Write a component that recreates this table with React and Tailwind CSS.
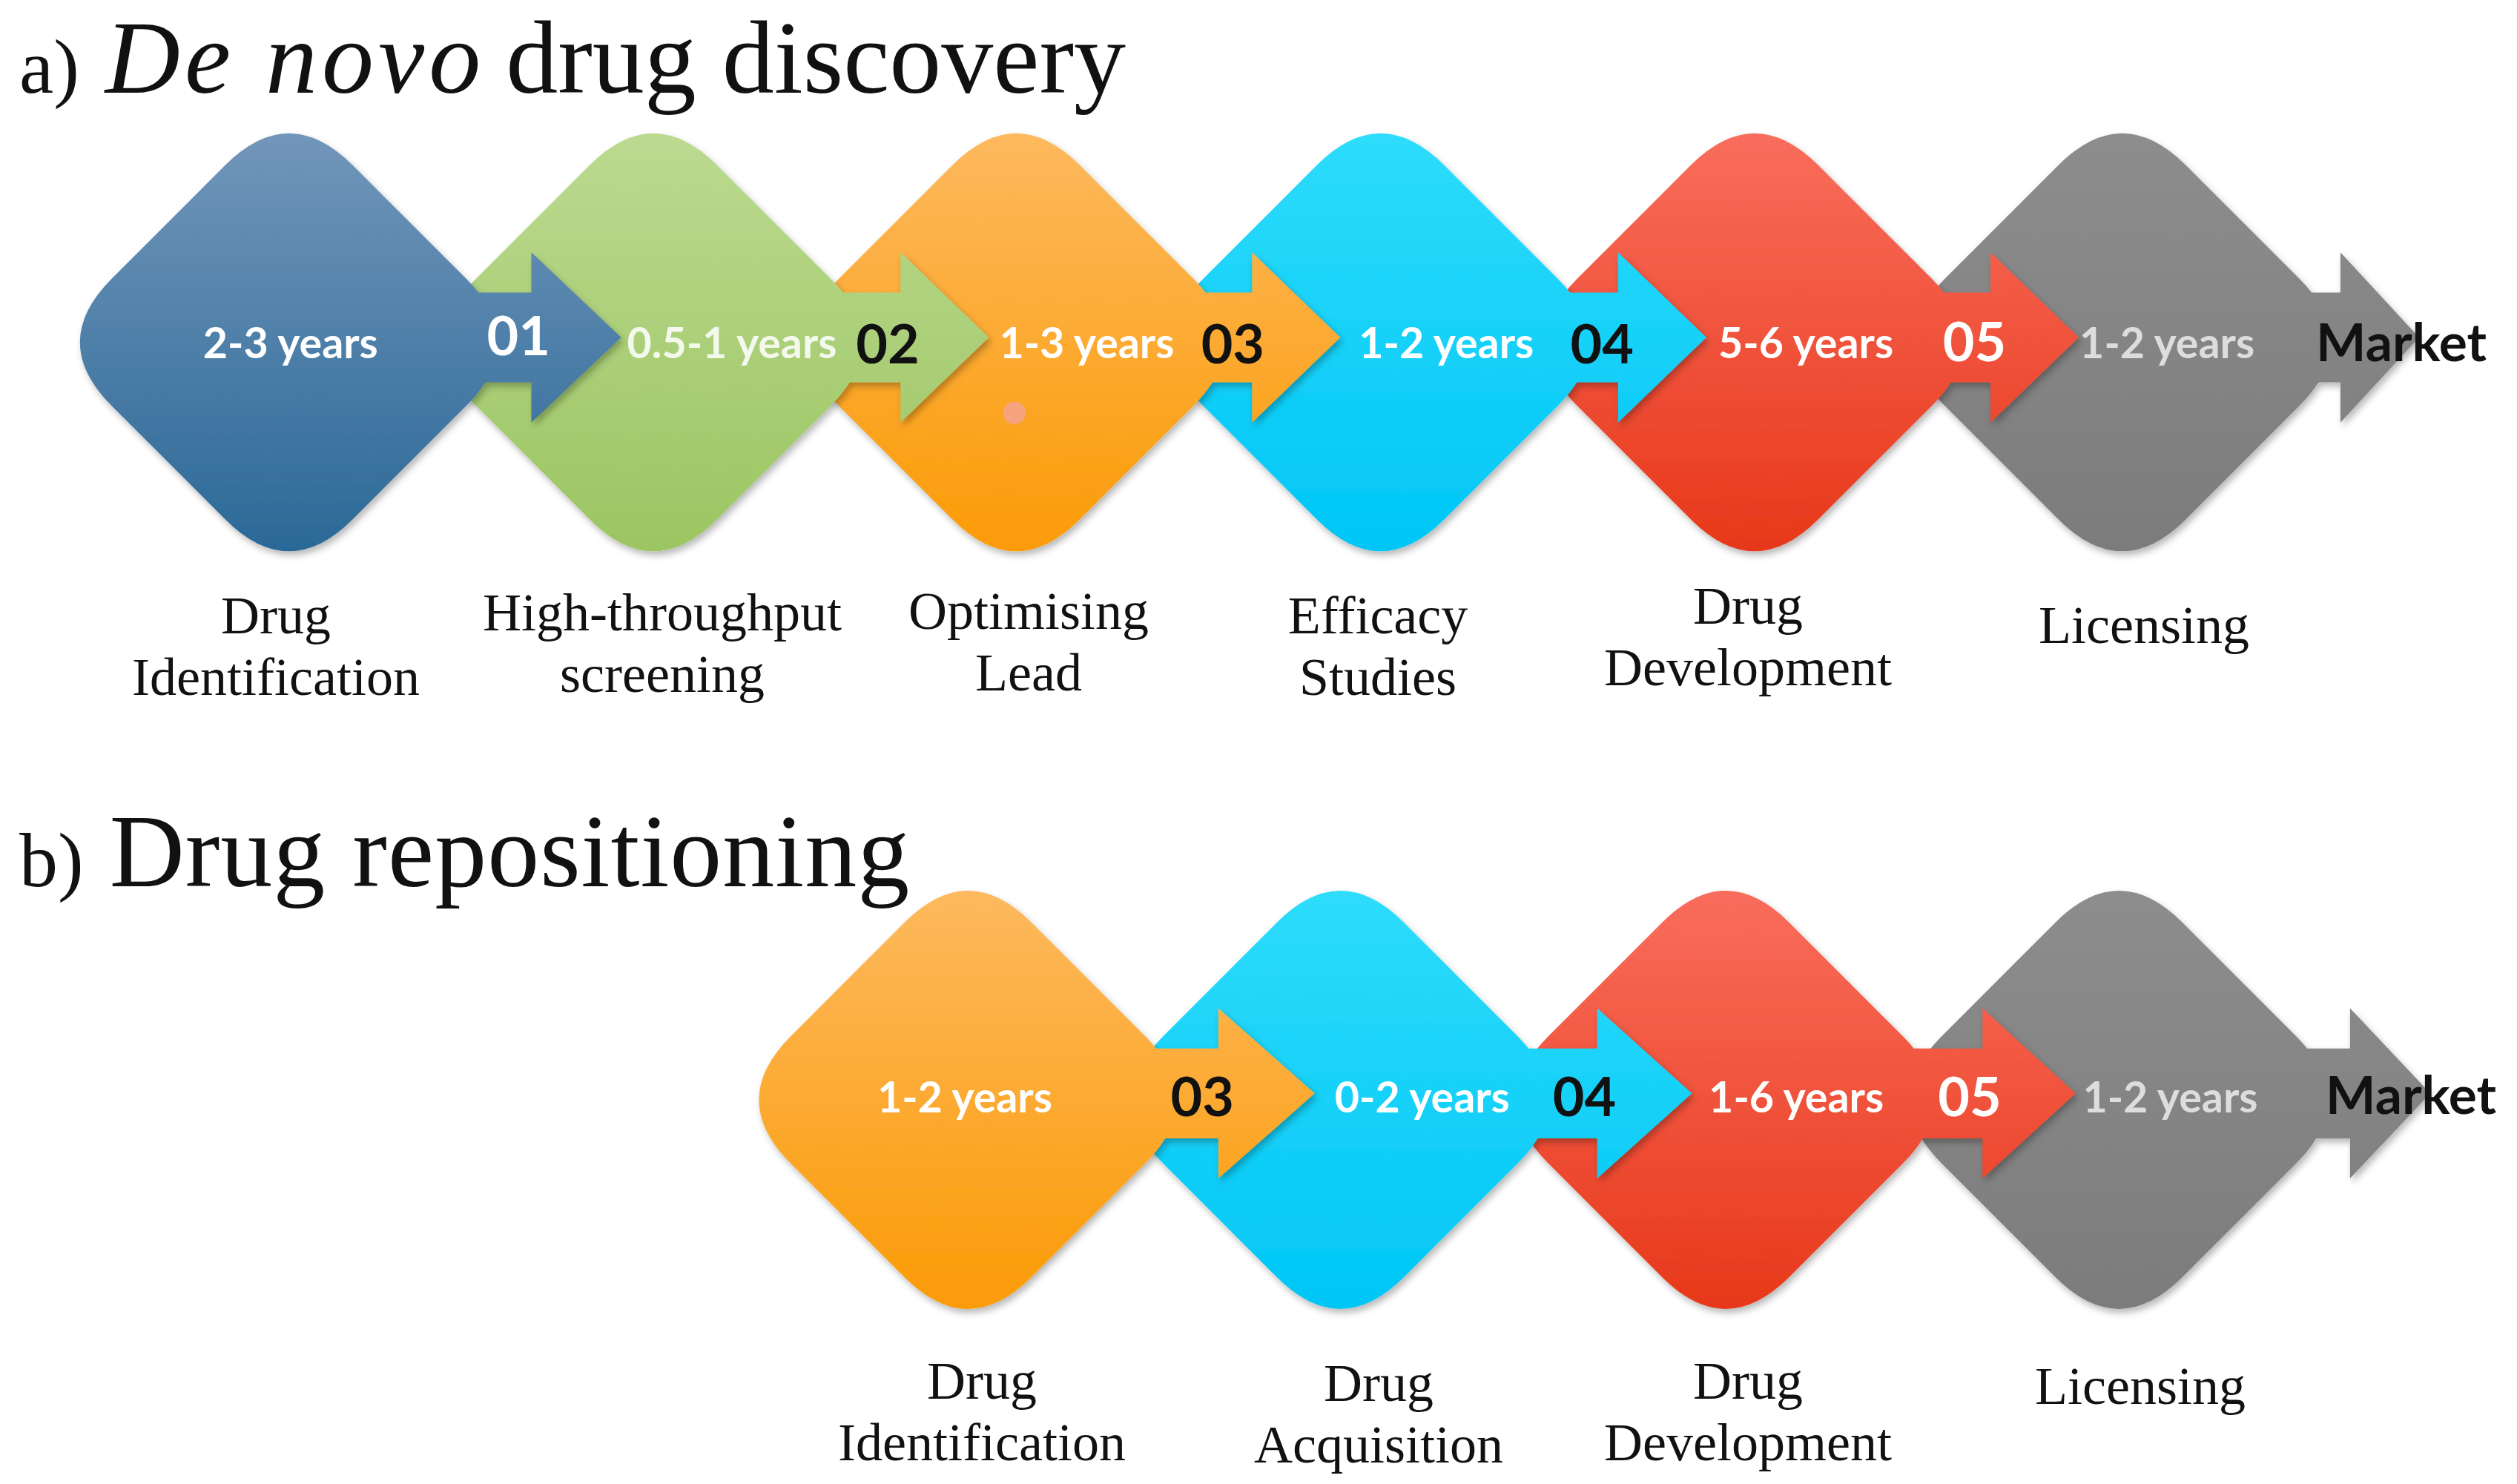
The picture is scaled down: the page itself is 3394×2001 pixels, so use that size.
import React from 'react';

// geometry is in the units of the 1568px-wide source figure, the svg viewBox scales it up
const H = 150; // sharp half diagonal
const K = 39.6; // rounding, distance from the corner along each edge / sqrt 2

const diamondPath = (cx, cy) =>
  `M ${cx - K} ${cy - H + K} Q ${cx} ${cy - H} ${cx + K} ${cy - H + K} ` +
  `L ${cx + H - K} ${cy - K} Q ${cx + H} ${cy} ${cx + H - K} ${cy + K} ` +
  `L ${cx + K} ${cy + H - K} Q ${cx} ${cy + H} ${cx - K} ${cy + H - K} ` +
  `L ${cx - H + K} ${cy + K} Q ${cx - H} ${cy} ${cx - H + K} ${cy - K} Z`;

const arrowPath = (base, tip, cy) =>
  `M ${base - 70} ${cy - 28} L ${base} ${cy - 28} L ${base} ${cy - 53} L ${tip} ${cy} ` +
  `L ${base} ${cy + 53} L ${base} ${cy + 28} L ${base - 70} ${cy + 28} Z`;

const ROW_A = {
  id: 'a',
  cy: 213,
  acy: 210,
  diamonds: [
    { cx: 180, from: '#7296ba', to: '#2b6997' },
    { cx: 407, from: '#bbda90', to: '#9cc562' },
    { cx: 633, from: '#fdb95e', to: '#fb9b06' },
    { cx: 860, from: '#2edcfb', to: '#00c6f6' },
    { cx: 1093, from: '#f96d5c', to: '#e7381a' },
    { cx: 1322, from: '#8d8d8d', to: '#7c7c7c' },
  ],
  arrows: [
    { base: 331, tip: 387 },
    { base: 561, tip: 616 },
    { base: 780, tip: 835 },
    { base: 1008, tip: 1063 },
    { base: 1240, tip: 1295 },
    { base: 1458, tip: 1507 },
  ],
  years: [
    { x: 181, text: '2-3 years', fill: '#ffffff' },
    { x: 456, text: '0.5-1 years', fill: '#f3f9ec' },
    { x: 677, text: '1-3 years', fill: '#ffffff' },
    { x: 901, text: '1-2 years', fill: '#ffffff' },
    { x: 1125, text: '5-6 years', fill: '#ffffff' },
    { x: 1350, text: '1-2 years', fill: '#dddddd' },
  ],
  yearsY: 223,
  steps: [
    { x: 323, y: 221, text: '01', fill: '#ffffff' },
    { x: 553, y: 226, text: '02', fill: '#111111' },
    { x: 768, y: 226, text: '03', fill: '#111111' },
    { x: 998, y: 226, text: '04', fill: '#111111' },
    { x: 1230, y: 225, text: '05', fill: '#ffffff' },
  ],
  market: { x: 1496, y: 225 },
  dot: true,
};

const ROW_B = {
  id: 'b',
  cy: 685,
  acy: 681,
  diamonds: [
    { cx: 603, from: '#fdb95e', to: '#fb9b06' },
    { cx: 835, from: '#2edcfb', to: '#00c6f6' },
    { cx: 1075, from: '#f96d5c', to: '#e7381a' },
    { cx: 1320, from: '#8d8d8d', to: '#7c7c7c' },
  ],
  arrows: [
    { base: 759, tip: 819 },
    { base: 995, tip: 1054 },
    { base: 1235, tip: 1293 },
    { base: 1464, tip: 1514 },
  ],
  years: [
    { x: 601, text: '1-2 years', fill: '#ffffff' },
    { x: 886, text: '0-2 years', fill: '#ffffff' },
    { x: 1119, text: '1-6 years', fill: '#ffffff' },
    { x: 1352, text: '1-2 years', fill: '#dddddd' },
  ],
  yearsY: 693,
  steps: [
    { x: 749, y: 695, text: '03', fill: '#111111' },
    { x: 987, y: 695, text: '04', fill: '#111111' },
    { x: 1227, y: 695, text: '05', fill: '#ffffff' },
  ],
  market: { x: 1502, y: 694 },
  dot: false,
};

const sans = 'Lato, "Open Sans", sans-serif';

const Chain = ({ row, viewBox, className }) => {
  // a diamond and its outgoing arrow are one shape (one shadow, one gradient);
  // the left shape lies over the right one, so paint right to left
  const steps = row.diamonds.map((d, i) => ({ ...d, i, arrow: row.arrows[i] })).reverse();
  return (
    <svg viewBox={viewBox} className={className} preserveAspectRatio="none">
      <defs>
        {row.diamonds.map((d, i) => (
          <linearGradient
            key={i}
            id={`g-${row.id}-${i}`}
            gradientUnits="userSpaceOnUse"
            x1="0"
            y1={row.cy - 130}
            x2="0"
            y2={row.cy + 130}
          >
            <stop offset="0" stopColor={d.from} />
            <stop offset="1" stopColor={d.to} />
          </linearGradient>
        ))}
        <filter id={`sh-${row.id}`} x="-10%" y="-10%" width="120%" height="120%">
          <feDropShadow dx="1.5" dy="2.5" stdDeviation="2.2" floodColor="#000" floodOpacity="0.28" />
        </filter>
      </defs>

      {steps.map((d) => (
        <g key={d.i} filter={`url(#sh-${row.id})`} fill={`url(#g-${row.id}-${d.i})`}>
          <path d={diamondPath(d.cx, row.cy)} />
          {d.arrow && <path d={arrowPath(d.arrow.base, d.arrow.tip, row.acy)} />}
        </g>
      ))}

      {row.dot && <circle cx="632" cy="257" r="7" fill="#f7a47e" />}

      {row.years.map((t, i) => (
        <text key={i} x={t.x} y={row.yearsY} textAnchor="middle" fontFamily={sans} fontWeight="700" fontSize="26.5" fill={t.fill}>
          {t.text}
        </text>
      ))}

      {row.steps.map((s, i) => (
        <text key={i} x={s.x} y={s.y} textAnchor="middle" fontFamily={sans} fontWeight="700" fontSize="34" fill={s.fill}>
          {s.text}
        </text>
      ))}

      <text x={row.market.x} y={row.market.y} textAnchor="middle" fontFamily={sans} fontWeight="700" fontSize="33" fill="#111111">
        Market
      </text>
    </svg>
  );
};

export default function App() {
  return (
    <div className="w-[3394px] h-[2001px] bg-white overflow-hidden flex flex-col text-[#111] font-['Liberation_Serif',serif]">
      {/* a) */}
      <div className="h-[152px] shrink-0 flex items-baseline pt-[8px] pl-[26px] leading-none whitespace-nowrap">
        <span className="text-[104px]">a)</span>
        <span className="ml-[35px] text-[140px] italic tracking-[6px]">De novo</span>
        <span className="ml-[28px] text-[140px]">drug discovery</span>
      </div>

      <Chain row={ROW_A} viewBox="0 70 1568 286" className="block shrink-0 w-[3394px] h-[619px]" />

      <div className="relative h-[307px] shrink-0 text-[72px] leading-[83px] text-center whitespace-nowrap">
        <div className="absolute left-[372px] top-[18px] -translate-x-1/2">Drug<br />Identification</div>
        <div className="absolute left-[893px] top-[14px] -translate-x-1/2">High-throughput<br />screening</div>
        <div className="absolute left-[1387px] top-[12px] -translate-x-1/2">Optimising<br />Lead</div>
        <div className="absolute left-[1858px] top-[18px] -translate-x-1/2">Efficacy<br />Studies</div>
        <div className="absolute left-[2357px] top-[5px] -translate-x-1/2">Drug<br />Development</div>
        <div className="absolute left-[2891px] top-[31px] -translate-x-1/2">Licensing</div>
      </div>

      {/* b) */}
      <div className="h-[91px] shrink-0 flex items-baseline pl-[26px] leading-none whitespace-nowrap">
        <span className="text-[104px]">b)</span>
        <span className="ml-[35px] text-[140px] tracking-[1px]">Drug repositioning</span>
      </div>

      <Chain row={ROW_B} viewBox="0 540 1568 290" className="block shrink-0 w-[3394px] h-[628px]" />

      <div className="relative h-[204px] shrink-0 text-[72px] leading-[83px] text-center whitespace-nowrap">
        <div className="absolute left-[1324px] top-[24px] -translate-x-1/2">Drug<br />Identification</div>
        <div className="absolute left-[1859px] top-[27px] -translate-x-1/2">Drug<br />Acquisition</div>
        <div className="absolute left-[2357px] top-[24px] -translate-x-1/2">Drug<br />Development</div>
        <div className="absolute left-[2886px] top-[31px] -translate-x-1/2">Licensing</div>
      </div>
    </div>
  );
}
